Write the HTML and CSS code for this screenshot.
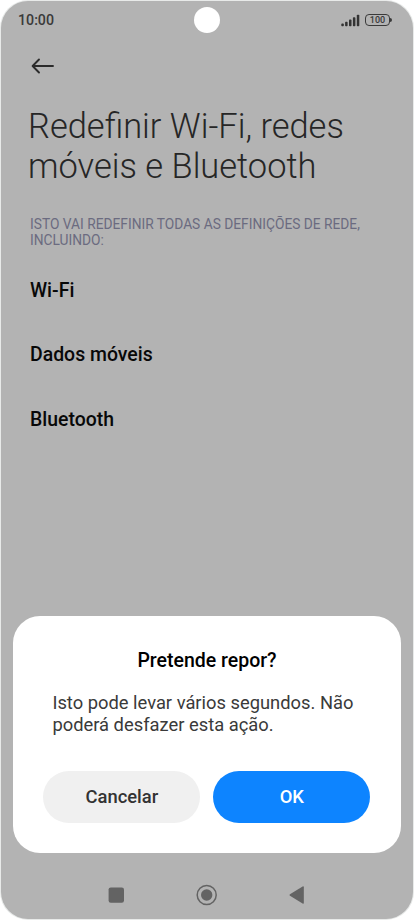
FILE: index.html
```html
<!DOCTYPE html>
<html lang="pt">
<head>
    <meta charset="UTF-8">
    <title>Redefinir Wi-Fi, redes móveis e Bluetooth</title>
    <link rel="stylesheet" href="styles.css">
</head>
<body>
    <div class="phone">
        <header class="status-bar">
            <span class="time">10:00</span>
            <span class="camera"></span>
            <div class="status-icons">
                <svg class="signal" width="19" height="13" viewBox="0 0 19 13">
                    <rect x="0.3" y="9.6" width="2.5" height="2.6" rx="0.8"/>
                    <rect x="4.1" y="7.8" width="2.5" height="4.4" rx="0.8"/>
                    <rect x="8" y="5.6" width="2.5" height="6.6" rx="0.8"/>
                    <rect x="11.9" y="3.2" width="2.5" height="9" rx="0.8"/>
                    <rect x="15.8" y="0.8" width="2.5" height="11.4" rx="0.8"/>
                </svg>
                <span class="battery">100</span>
            </div>
        </header>
        <main>
            <svg class="back" width="24" height="18" viewBox="0 0 24 18">
                <path d="M23 9H2.8M9 2.5L2.6 9 9 15.5"/>
            </svg>
            <h1>Redefinir Wi-Fi, redes<br>móveis e Bluetooth</h1>
            <p class="subtitle">Isto vai redefinir todas as definições de rede,<br>incluindo:</p>
            <ul class="items">
                <li>Wi-Fi</li>
                <li>Dados móveis</li>
                <li>Bluetooth</li>
            </ul>
        </main>
        <section class="dialog">
            <h2>Pretende repor?</h2>
            <p>Isto pode levar vários segundos. Não<br>poderá desfazer esta ação.</p>
            <div class="buttons">
                <button type="button" class="cancel">Cancelar</button>
                <button type="button" class="ok">OK</button>
            </div>
        </section>
        <nav class="nav-bar">
            <svg width="22" height="22" viewBox="0 0 22 22">
                <rect x="3.6" y="3.4" width="15.4" height="15.4" rx="2.2"/>
            </svg>
            <svg width="22" height="22" viewBox="0 0 22 22">
                <circle class="ring" cx="10.7" cy="11" r="9.5"/>
                <circle cx="10.7" cy="11" r="5.7"/>
            </svg>
            <svg width="22" height="22" viewBox="0 0 22 22">
                <path d="M3 10.2L15.6 2.5q1.2-.6 1.2.7v15.6q0 1.3-1.2.7L3 11.8q-1.2-.8 0-1.6z"/>
            </svg>
        </nav>
    </div>
</body>
</html>
```

FILE: styles.css
```css
* {
    box-sizing: border-box;
    margin: 0;
    padding: 0;
}
body {
    height: 920px;
    padding: 1px;
    background-color: #fff;
    font-family: Roboto, sans-serif;
    overflow: hidden;
}
.phone {
    display: flex;
    flex-direction: column;
    height: 918px;
    border-radius: 27px;
    background-color: #b3b3b3;
    box-shadow: 0 0 0 1px #e8eae9;
}
.status-bar {
    display: grid;
    grid-template-columns: 1fr 26px 1fr;
    align-items: center;
    height: 38px;
    padding: 0 17px;
}
.time {
    color: #3a3a3a;
    font-size: 14.2px;
    font-weight: 500;
}
.camera {
    width: 26px;
    height: 26px;
    border-radius: 50%;
    background-color: #fff;
}
.status-icons {
    display: flex;
    justify-content: flex-end;
    align-items: center;
    gap: 5px;
    padding-right: 4px;
}
.signal {
    fill: #333;
}
.battery {
    position: relative;
    width: 25px;
    height: 12px;
    margin-right: 2px;
    border: 1.3px solid #3a3a3a;
    border-radius: 4px;
    color: #3a3a3a;
    font-size: 9px;
    font-weight: 500;
    line-height: 10px;
    text-align: center;
}
.battery::after {
    content: "";
    position: absolute;
    top: 3px;
    right: -3px;
    width: 2px;
    height: 4px;
    border-radius: 0 2px 2px 0;
    background-color: #3a3a3a;
}
main {
    flex: 1;
    padding: 18px 27px 0;
}
.back {
    display: block;
    margin-left: 2px;
    fill: none;
    stroke: #2b2b2b;
    stroke-width: 1.9;
    stroke-linecap: round;
    stroke-linejoin: round;
}
h1 {
    margin-top: 31px;
    color: #262626;
    font-size: 34.45px;
    font-weight: 300;
    line-height: 40px;
}
.subtitle {
    margin: 30px 0 0 2px;
    color: #6b6b80;
    font-size: 13.75px;
    line-height: 16px;
    text-transform: uppercase;
}
.items {
    margin: 11px 0 0 2px;
    list-style: none;
}
.items li {
    height: 64.4px;
    color: #080808;
    font-size: 19.45px;
    font-weight: 500;
    line-height: 64px;
}
.dialog {
    height: 237px;
    margin: 0 12.4px;
    padding: 33px 30px 0;
    border-radius: 27px;
    background-color: #fff;
}
.dialog h2 {
    color: #000;
    font-size: 19.5px;
    font-weight: 500;
    line-height: 24px;
    text-align: center;
}
.dialog p {
    margin: 19px 0 0 9px;
    color: #3a3a3a;
    font-size: 18.35px;
    line-height: 22px;
}
.buttons {
    display: flex;
    gap: 13px;
    margin: 35px 0.4px 0 0;
}
button {
    flex: 1;
    height: 51.5px;
    border: none;
    border-radius: 26px;
    font-family: inherit;
    font-size: 18.4px;
    font-weight: 500;
}
.cancel {
    background-color: #f0f0f0;
    color: #333;
}
.ok {
    background-color: #0d84ff;
    color: #fff;
}
.nav-bar {
    display: flex;
    justify-content: center;
    gap: 69px;
    height: 66px;
    padding-top: 31px;
    fill: #636363;
}
.ring {
    fill: none;
    stroke: #636363;
    stroke-width: 1.5;
}
```
